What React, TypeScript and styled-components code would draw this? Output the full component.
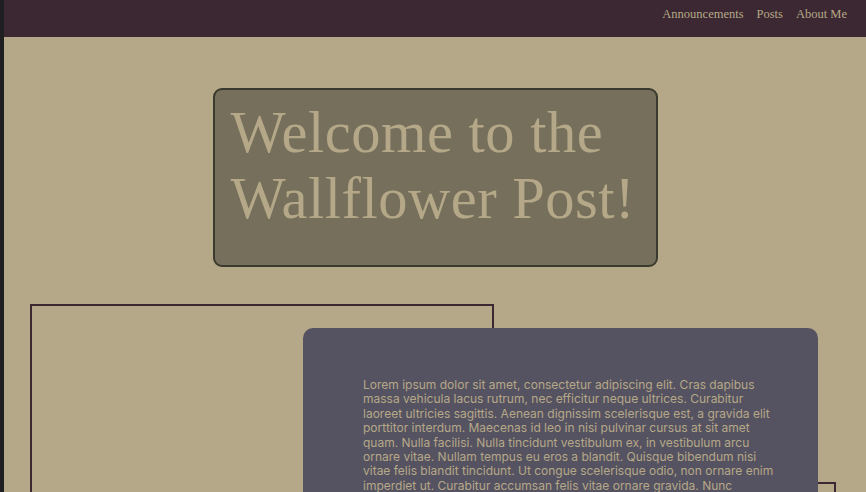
import React from "react";
import styled, { createGlobalStyle } from "styled-components";

const Global = createGlobalStyle`
  html, body { margin: 0; padding: 0; }
  body { background: #1f1f22; overflow: hidden; }
  #root { margin-left: 4px; background: #b5a888; min-height: 492px; }
`;

const Header = styled.header`
  height: 37px;
  background: #3c2832;
  display: flex;
  justify-content: flex-end;
  align-items: center;
  padding-right: 19px;
  gap: 13px;
`;

const NavLink = styled.a`
  font-family: "Liberation Serif", "DejaVu Serif", serif;
  font-size: 12.5px;
  color: #b5a888;
  text-decoration: none;
  margin-top: -8px;
`;

const Main = styled.main`
  padding-top: 51px;
  display: flex;
  flex-direction: column;
`;

const Hero = styled.div`
  align-self: center;
  width: 445px;
  height: 179px;
  box-sizing: border-box;
  background: #756f5b;
  border: 2px solid #3a3a2e;
  border-radius: 9px;
  padding: 10px 16px;
`;

const Title = styled.h1`
  margin: 0;
  font-family: "Liberation Serif", "Times New Roman", serif;
  font-weight: normal;
  font-size: 58.5px;
  letter-spacing: 0.5px;
  line-height: 66px;
  color: #b5a888;
`;

const Section = styled.section`
  position: relative;
  margin-top: 37px;
  padding: 24px 0 0 299px;
  height: 200px;
`;

const Frame = styled.div<{ $left: number; $top: number; $width: number }>`
  position: absolute;
  left: ${(p) => p.$left}px;
  top: ${(p) => p.$top}px;
  width: ${(p) => p.$width}px;
  height: 400px;
  box-sizing: border-box;
  border: 2px solid #3c2832;
`;

const Card = styled.article`
  position: relative;
  width: 515px;
  height: 300px;
  box-sizing: border-box;
  background: #555361;
  border-radius: 10px;
  padding: 50px 38px 0 60px;
`;

const Body = styled.p`
  margin: 0;
  font-family: Inter, "Liberation Sans", sans-serif;
  font-size: 12px;
  line-height: 14.4px;
  color: #b5a888;
`;

export default function App() {
  return (
    <>
      <Global />
      <Header>
        <NavLink href="#">Announcements</NavLink>
        <NavLink href="#">Posts</NavLink>
        <NavLink href="#">About Me</NavLink>
      </Header>
      <Main>
        <Hero>
          <Title>Welcome to the Wallflower Post!</Title>
        </Hero>
        <Section>
          <Frame $left={26} $top={0} $width={464} />
          <Frame $left={500} $top={178} $width={332} />
          <Card>
            <Body>
              Lorem ipsum dolor sit amet, consectetur adipiscing elit. Cras dapibus massa vehicula lacus rutrum, nec
              efficitur neque ultrices. Curabitur laoreet ultricies sagittis. Aenean dignissim scelerisque est, a
              gravida elit porttitor interdum. Maecenas id leo in nisi pulvinar cursus at sit amet quam. Nulla
              facilisi. Nulla tincidunt vestibulum ex, in vestibulum arcu ornare vitae. Nullam tempus eu eros a
              blandit. Quisque bibendum nisi vitae felis blandit tincidunt. Ut congue scelerisque odio, non ornare
              enim imperdiet ut. Curabitur accumsan felis vitae ornare gravida. Nunc
            </Body>
          </Card>
        </Section>
      </Main>
    </>
  );
}
